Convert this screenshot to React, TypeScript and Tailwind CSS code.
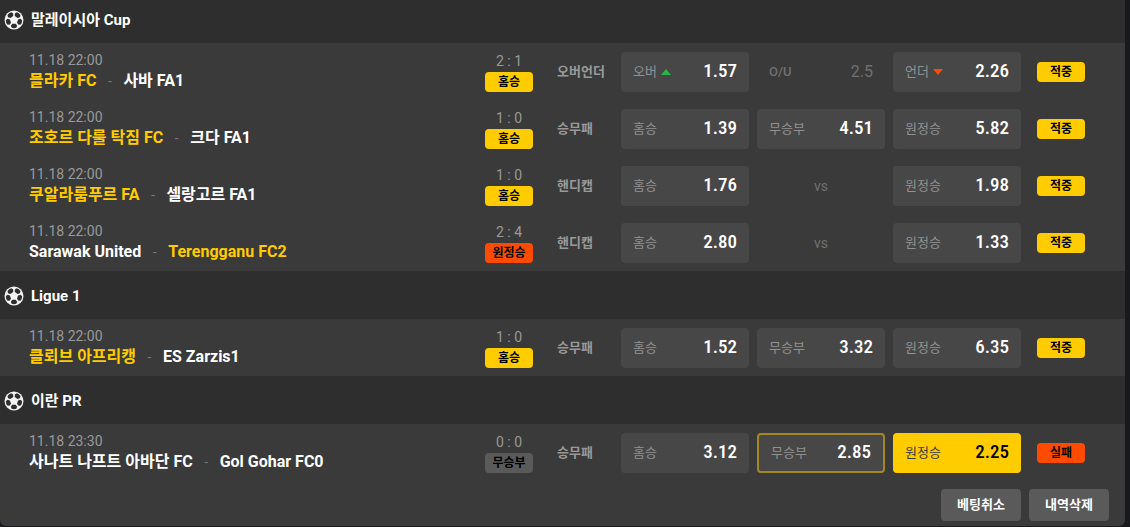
import clsx from 'clsx';

type Tone = 'win' | 'lose' | 'draw';

interface Odd {
	label: string;
	value: string;
	arrow?: 'up' | 'down';
	state?: 'result' | 'picked';
}

interface Match {
	date: string;
	home: string;
	away: string;
	winner?: 'home' | 'away';
	score: string;
	result: string;
	resultTone: Tone;
	market: string;
	homeOdd: Odd;
	middle: Odd | 'vs' | { line: string };
	awayOdd: Odd;
	hit: boolean;
}

interface League {
	name: string;
	matches: Match[];
}

const leagues: League[] = [
	{
		name: '말레이시아 Cup',
		matches: [
			{
				date: '11.18 22:00',
				home: '믈라카 FC',
				away: '사바 FA1',
				winner: 'home',
				score: '2 : 1',
				result: '홈승',
				resultTone: 'win',
				market: '오버언더',
				homeOdd: { label: '오버', value: '1.57', arrow: 'up' },
				middle: { line: '2.5' },
				awayOdd: { label: '언더', value: '2.26', arrow: 'down' },
				hit: true,
			},
			{
				date: '11.18 22:00',
				home: '조호르 다룰 탁짐 FC',
				away: '크다 FA1',
				winner: 'home',
				score: '1 : 0',
				result: '홈승',
				resultTone: 'win',
				market: '승무패',
				homeOdd: { label: '홈승', value: '1.39' },
				middle: { label: '무승부', value: '4.51' },
				awayOdd: { label: '원정승', value: '5.82' },
				hit: true,
			},
			{
				date: '11.18 22:00',
				home: '쿠알라룸푸르 FA',
				away: '셀랑고르 FA1',
				winner: 'home',
				score: '1 : 0',
				result: '홈승',
				resultTone: 'win',
				market: '핸디캡',
				homeOdd: { label: '홈승', value: '1.76' },
				middle: 'vs',
				awayOdd: { label: '원정승', value: '1.98' },
				hit: true,
			},
			{
				date: '11.18 22:00',
				home: 'Sarawak United',
				away: 'Terengganu FC2',
				winner: 'away',
				score: '2 : 4',
				result: '원정승',
				resultTone: 'lose',
				market: '핸디캡',
				homeOdd: { label: '홈승', value: '2.80' },
				middle: 'vs',
				awayOdd: { label: '원정승', value: '1.33' },
				hit: true,
			},
		],
	},
	{
		name: 'Ligue 1',
		matches: [
			{
				date: '11.18 22:00',
				home: '클뢰브 아프리캥',
				away: 'ES Zarzis1',
				winner: 'home',
				score: '1 : 0',
				result: '홈승',
				resultTone: 'win',
				market: '승무패',
				homeOdd: { label: '홈승', value: '1.52' },
				middle: { label: '무승부', value: '3.32' },
				awayOdd: { label: '원정승', value: '6.35' },
				hit: true,
			},
		],
	},
	{
		name: '이란 PR',
		matches: [
			{
				date: '11.18 23:30',
				home: '사나트 나프트 아바단 FC',
				away: 'Gol Gohar FC0',
				score: '0 : 0',
				result: '무승부',
				resultTone: 'draw',
				market: '승무패',
				homeOdd: { label: '홈승', value: '3.12' },
				middle: { label: '무승부', value: '2.85', state: 'result' },
				awayOdd: { label: '원정승', value: '2.25', state: 'picked' },
				hit: false,
			},
		],
	},
];

const badgeTone = {
	win: 'bg-[#ffcc00]',
	lose: 'bg-[#ff4b00]',
	draw: 'bg-[#5a5a5a]',
};

export default function App() {
	return (
		<div className="bg-[#17191d] pr-[5px] pb-px font-['Roboto','Noto_Sans_CJK_KR',sans-serif]">
			<main className="overflow-hidden rounded-b-md bg-[#3a3a3a]">
				{leagues.map((league, i) => (
					<section key={league.name}>
						<LeagueHeader name={league.name} first={i === 0} />
						{league.matches.map((match) => (
							<MatchRow key={match.home} match={match} />
						))}
					</section>
				))}
				<div className="flex justify-end gap-2 pt-2 pr-4 pb-[5px]">
					<ActionButton label="베팅취소" />
					<ActionButton label="내역삭제" />
				</div>
			</main>
		</div>
	);
}

const LeagueHeader = ({ name, first }: { name: string; first: boolean }) => {
	return (
		<h2
			className={clsx(
				'flex items-center gap-[7px] bg-[#2e2e2e] pl-1 text-[15px] font-bold text-white',
				first ? 'h-[43px] pb-[3px]' : 'h-12 pt-0.5',
			)}>
			<SoccerBall />
			{name}
		</h2>
	);
};

const MatchRow = ({ match }: { match: Match }) => {
	return (
		<div className="flex h-[57px] items-center pr-10 pl-[29px]">
			<div className="min-w-0 flex-1 whitespace-nowrap">
				<div className="mb-0.5 text-sm leading-4 text-[#999999]">
					{match.date}
				</div>
				<div className="flex items-center text-base leading-[22px] font-bold">
					<span
						className={
							match.winner === 'home' ? 'text-[#ffcc00]' : 'text-white'
						}>
						{match.home}
					</span>
					<span className="w-[27px] text-center text-sm font-normal text-[#777777]">
						-
					</span>
					<span
						className={
							match.winner === 'away' ? 'text-[#ffcc00]' : 'text-white'
						}>
						{match.away}
					</span>
				</div>
			</div>
			<div className="flex w-12 flex-col items-center">
				<span className="mb-0.5 text-sm leading-[18px] text-[#999999]">
					{match.score}
				</span>
				<Badge label={match.result} tone={match.resultTone} />
			</div>
			<div className="ml-6 w-16 text-[13px] font-bold text-[#999999]">
				{match.market}
			</div>
			<div className="flex gap-2">
				<OddButton odd={match.homeOdd} />
				<MiddleCell middle={match.middle} />
				<OddButton odd={match.awayOdd} />
			</div>
			<div className="ml-4 w-12">
				<Badge
					label={match.hit ? '적중' : '실패'}
					tone={match.hit ? 'win' : 'lose'}
				/>
			</div>
		</div>
	);
};

const MiddleCell = ({ middle }: { middle: Match['middle'] }) => {
	if (middle === 'vs') {
		return (
			<div className="flex h-10 w-32 items-center justify-center text-sm text-[#707070]">
				vs
			</div>
		);
	}
	if ('line' in middle) {
		return (
			<div className="flex h-10 w-32 items-center justify-between px-3 text-[#707070]">
				<span className="text-[13px] font-medium">O/U</span>
				<span className="text-base">{middle.line}</span>
			</div>
		);
	}
	return <OddButton odd={middle} />;
};

const OddButton = ({ odd }: { odd: Odd }) => {
	const picked = odd.state === 'picked';
	return (
		<button
			type="button"
			className={clsx(
				'flex h-10 w-32 items-center justify-between rounded px-3',
				picked ? 'bg-[#ffcc00] text-black' : 'bg-[#474747] text-white',
				odd.state === 'result' && 'border-2 border-[#a38725]',
			)}>
			<span
				className={clsx(
					'flex items-center gap-1 text-[13px]',
					picked ? 'text-[#3a3a3a]' : 'text-[#919191]',
				)}>
				{odd.label}
				{odd.arrow && <Arrow direction={odd.arrow} />}
			</span>
			<span className="font-['Roboto_Condensed','Roboto',sans-serif] text-[19px] font-medium">
				{odd.value}
			</span>
		</button>
	);
};

const Badge = ({ label, tone }: { label: string; tone: Tone }) => {
	return (
		<span
			className={clsx(
				'flex h-5 w-12 items-center justify-center rounded text-xs font-bold text-black',
				badgeTone[tone],
			)}>
			{label}
		</span>
	);
};

const ActionButton = ({ label }: { label: string }) => {
	return (
		<button
			type="button"
			className="h-8 w-20 rounded bg-[#5a5a5a] text-[13px] font-bold text-white">
			{label}
		</button>
	);
};

const Arrow = ({ direction }: { direction: 'up' | 'down' }) => {
	return (
		<svg width="10" height="6" viewBox="0 0 10 6" aria-hidden>
			{direction === 'up' ? (
				<path d="M0 6L5 0l5 6z" fill="#28b446" />
			) : (
				<path d="M0 0h10L5 6z" fill="#ff4b00" />
			)}
		</svg>
	);
};

const SoccerBall = () => {
	return (
		<svg width="20" height="20" viewBox="0 0 20 20" aria-hidden>
			<circle cx="10" cy="10" r="9.5" fill="#f4f4f4" />
			{/* five dark panels around the centre one */}
			{[36, 108, 180, 252, 324].map((angle) => (
				<path
					key={angle}
					d="M8.3 6.3L6.8 4.2L7.7 2.2Q10 1.4 12.3 2.2L13.2 4.2L11.7 6.3z"
					fill="#2e2e2e"
					transform={`rotate(${angle} 10 10)`}
				/>
			))}
		</svg>
	);
};
